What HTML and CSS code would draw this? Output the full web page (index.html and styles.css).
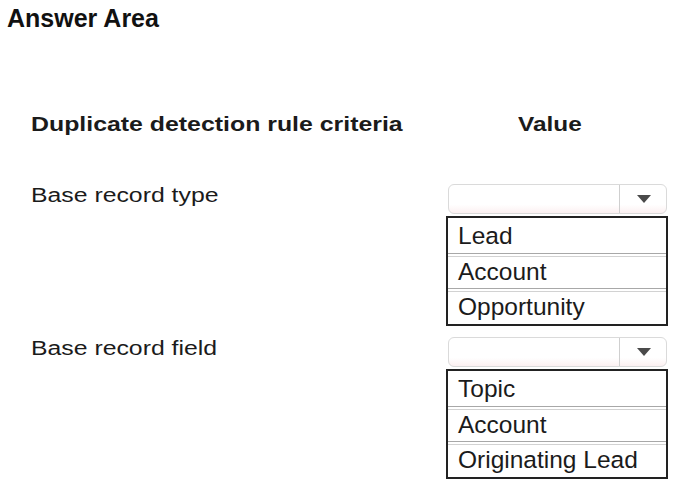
FILE: index.html
```
<!DOCTYPE html>
<html>
<head>
    <link rel="stylesheet" href="styles.css">
</head>
<body>
    <div class="title">Answer Area</div>
    <div class="answer">
        <div class="head">
            <span class="wide criteria">Duplicate detection rule criteria</span>
        </div>
        <div class="head">
            <span class="wide value">Value</span>
        </div>

        <div class="label"><span class="wide">Base record type</span></div>
        <div class="pick">
            <div class="select">
                <div class="field"></div>
                <div class="arrow">
                    <svg width="14" height="8" viewBox="0 0 14 8"><polygon points="0,0 14,0 7,8" fill="#4a4a4a"/></svg>
                </div>
            </div>
            <ul class="options">
                <li>Lead</li>
                <li>Account</li>
                <li>Opportunity</li>
            </ul>
        </div>

        <div class="label"><span class="wide">Base record field</span></div>
        <div class="pick">
            <div class="select">
                <div class="field"></div>
                <div class="arrow">
                    <svg width="14" height="8" viewBox="0 0 14 8"><polygon points="0,0 14,0 7,8" fill="#4a4a4a"/></svg>
                </div>
            </div>
            <ul class="options">
                <li>Topic</li>
                <li>Account</li>
                <li>Originating Lead</li>
            </ul>
        </div>
    </div>
</body>
</html>
```

FILE: styles.css
```
body {
    margin: 0;
    background: #fff;
    color: #1b1b1b;
    font-family: "Liberation Sans", Arial, sans-serif;
}

.title {
    margin: 3px 0 0 7px;
    font-size: 25px;
    font-weight: bold;
    line-height: 30px;
    color: #111;
}

.answer {
    display: grid;
    grid-template-columns: 415px 222px;
    padding-left: 31px;
    margin-top: 79px;
}

/* the column headings and labels are drawn a little wider than normal */
.wide {
    display: inline-block;
    transform-origin: left center;
    transform: scaleX(1.24);
    white-space: nowrap;
}

.head {
    font-size: 19.5px;
    font-weight: bold;
    line-height: 24px;
    height: 24px;
    margin-bottom: 46px;
}

.head .wide {
    transform: scaleX(1.275);
}

.head .value {
    margin-left: 72px;
    transform: scaleX(1.25);
}

.label {
    font-size: 20px;
    line-height: 24px;
    padding-top: 1px;
}

.pick {
    margin-top: 1.5px;
    margin-bottom: 9px;
}

.select {
    display: flex;
    height: 30px;
    margin: 0 1px 0 2px;
    border: 1px solid #dadada;
    border-radius: 6px;
    background: linear-gradient(#fff 0%, #fff 70%, #fcf0f1 100%);
    box-sizing: border-box;
}

.field {
    flex: 1;
}

.arrow {
    width: 44px;
    border-left: 1px solid #cfcfcf;
    display: flex;
    align-items: center;
    justify-content: center;
    padding-left: 2px;
}

.options {
    list-style: none;
    margin: 2.5px 0 0 0;
    padding: 0;
    border: 2px solid #222;
}

.options li {
    font-size: 24.5px;
    line-height: 33.5px;
    padding: 1px 0 0 10px;
    border-bottom: 1px solid #a8a8a8;
    white-space: nowrap;
}

.options li:last-child {
    border-bottom: none;
    line-height: 34px;
}

.options li + li {
    box-shadow: inset 0 2px #fff, inset 0 3px #d2d2d2;
}
```
